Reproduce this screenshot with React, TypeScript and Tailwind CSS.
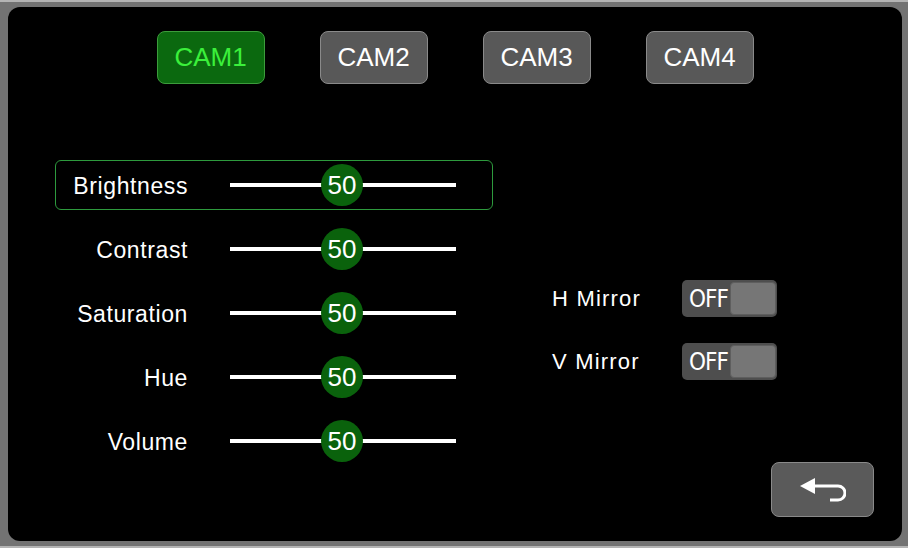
import { useState } from 'react';

const CAMS = ['CAM1', 'CAM2', 'CAM3', 'CAM4'];
const SETTINGS = ['Brightness', 'Contrast', 'Saturation', 'Hue', 'Volume'];
const MIRRORS = ['H Mirror', 'V Mirror'];

function Slider({ value }: { value: number }) {
  return (
    <div className="relative flex h-[44px] w-[226px] items-center">
      <div className="h-[4px] w-full bg-white" />
      <div
        className="absolute flex h-[42px] w-[42px] -translate-x-1/2 items-center justify-center rounded-full bg-[#0a620c] text-[26px] leading-none text-white"
        style={{ left: `${(value / 100) * 226 - 1}px` }}
      >
        {value}
      </div>
    </div>
  );
}

function Toggle() {
  return (
    <div className="flex h-[37px] w-[95px] items-center rounded-[5px] bg-[#4e4e4e] pl-[7px] pr-[1px]">
      <span className="flex-1 text-[24px] leading-none tracking-[-1px] text-white [font-family:'DejaVu_Sans_Condensed','DejaVu_Sans',sans-serif] [font-stretch:condensed]">
        OFF
      </span>
      <div className="h-[33px] w-[46px] rounded-[4px] border border-[#5e5e5e] bg-[#767676]" />
    </div>
  );
}

export default function App() {
  const [cam, setCam] = useState(0);
  const [selected] = useState(0);

  return (
    <div className="h-[548px] w-[908px] border-t-2 border-b-2 border-[#b4b4b4] bg-[#737373] pt-[5px] pb-[5px] pl-[8px] pr-[6px] [font-family:'Liberation_Sans',Arial,sans-serif]">
      <div className="flex h-full flex-col rounded-[12px] bg-black pt-[24px] pb-[24px] pr-[28px]">
        {/* camera tabs */}
        <div className="flex justify-center gap-[55px] pl-[28px]">
          {CAMS.map((c, i) => (
            <button
              key={c}
              onClick={() => setCam(i)}
              className={
                i === cam
                  ? 'h-[53px] w-[108px] rounded-[8px] border border-[#3c9c3c] bg-[#0b690f] text-[26px] text-[#3bf03b]'
                  : 'h-[53px] w-[108px] rounded-[8px] border border-[#8a8a8a] bg-[#585858] text-[26px] text-white'
              }
            >
              {c}
            </button>
          ))}
        </div>

        <div className="mt-[76px] flex flex-1">
          {/* picture settings */}
          <div className="ml-[47px] flex w-[438px] flex-col gap-[14px]">
            {SETTINGS.map((s, i) => (
              <div
                key={s}
                className={
                  i === selected
                    ? 'flex h-[50px] items-center rounded-[6px] border-[1.5px] border-[#2d9a3d] pr-[4px]'
                    : 'flex h-[50px] items-center rounded-[6px] border-[1.5px] border-transparent pr-[4px]'
                }
              >
                <span className="w-[132px] pt-[2px] text-right text-[23px] tracking-[0.6px] text-white">{s}</span>
                <div className="ml-[42px]">
                  <Slider value={50} />
                </div>
              </div>
            ))}
          </div>

          {/* mirror + back */}
          <div className="ml-[59px] flex flex-1 flex-col pt-[120px]">
            <div className="flex flex-col gap-[26px]">
              {MIRRORS.map((m) => (
                <div key={m} className="flex h-[37px] items-center">
                  <span className="w-[130px] text-[22px] tracking-[1.2px] text-white">{m}</span>
                  <Toggle />
                </div>
              ))}
            </div>
            <button className="mt-auto flex h-[55px] w-[103px] items-center justify-center self-end rounded-[8px] border border-[#8a8a8a] bg-[#5a5a5a]">
              <svg width="46" height="26" viewBox="0 0 46 26">
                <polygon points="0,9 15,1 15,17" fill="white" />
                <path d="M14 9 H38 A7 7 0 0 1 38 23 H30" fill="none" stroke="white" strokeWidth="3" />
              </svg>
            </button>
          </div>
        </div>
      </div>
    </div>
  );
}
